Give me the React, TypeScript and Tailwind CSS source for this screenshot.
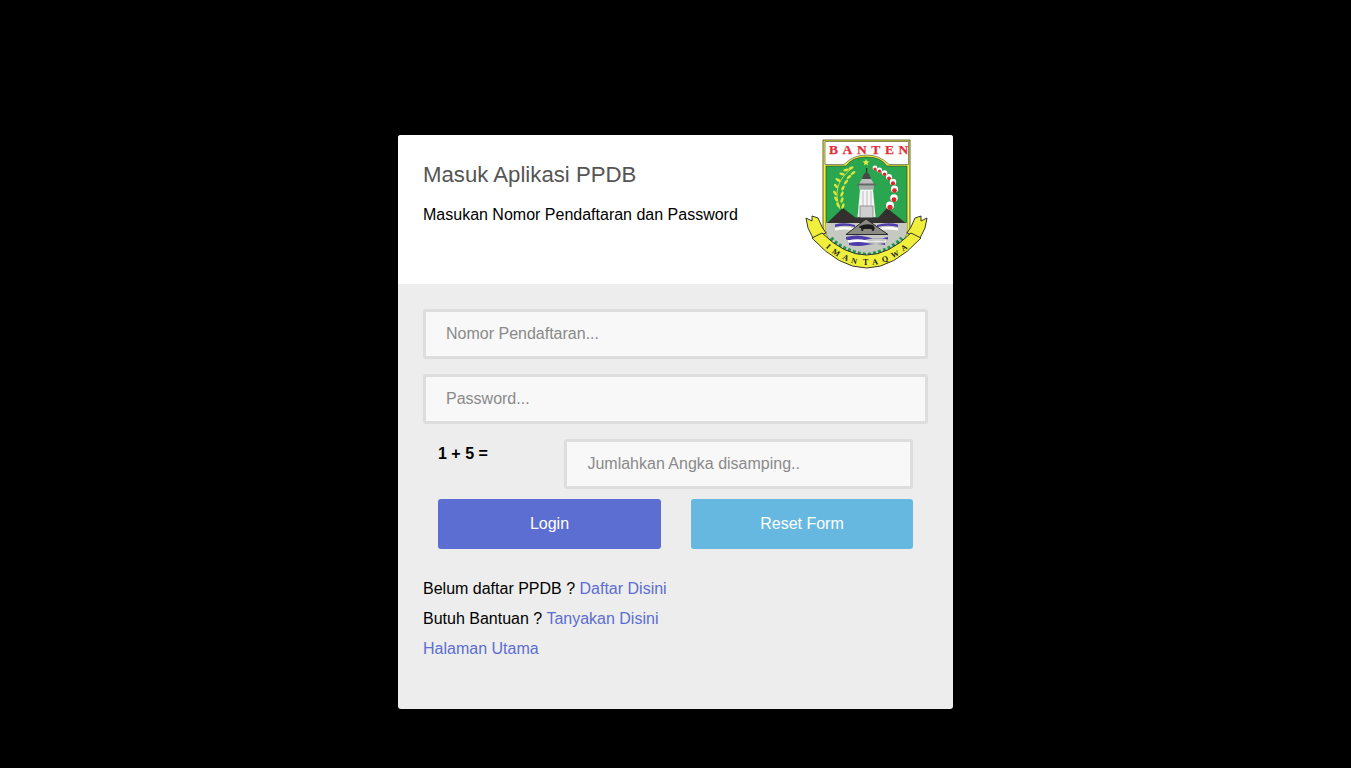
const inputClass =
  "block h-[50px] rounded-[3px] border-[3px] border-[#dddddd] bg-[#f8f8f8] pl-[20px] pr-4 text-[16px] text-[#555555] outline-none placeholder:text-[#8a8a8a]";

const ribbonLetters: [string, number, number, number][] = [
  ["I", 828.3, 246.7, 40],
  ["M", 836, 252.7, 33],
  ["A", 845.7, 257.7, 25],
  ["N", 854.3, 261, 15],
  ["T", 865.7, 262.8, 0],
  ["A", 875, 262, -8],
  ["Q", 885, 259.3, -17],
  ["W", 895, 254.3, -25],
  ["A", 904, 247.7, -37],
];

const cotton: [number, number, number][] = [
  [875, 168, 2.4],
  [879.5, 170, 2.6],
  [884.5, 173, 2.8],
  [889, 177, 3],
  [893, 182, 3.2],
  [894.5, 189, 3.6],
  [894, 198, 3.8],
  [890, 205.5, 4],
];

const leaves: [number, number, number][] = [
  [851, 168, -25],
  [846, 170, -10],
  [853, 173, -35],
  [842, 174, 15],
  [849, 177, -40],
  [838, 180, 30],
  [846, 182, -50],
  [836, 186, 45],
  [843, 188, -60],
  [835, 193, 55],
  [842, 194, -65],
  [836, 199, 60],
  [842, 200, -70],
  [838, 205, 60],
  [843, 206, -70],
];

function Logo() {
  return (
    <svg viewBox="805 135 125 135" width="125" height="135" className="block">
      <defs>
        <clipPath id="inner">
          <path d="M826 166 H846 Q852 157 866.5 157 Q881 157 887 166 H907 V230 Q907 248 866.5 256 Q826 248 826 230 Z" />
        </clipPath>
      </defs>
      {/* shield */}
      <path d="M823 140 H910 V230 Q910 250 866.5 258 Q823 250 823 230 Z" fill="#eef03c" stroke="#3c3c14" strokeWidth="0.8" />
      <path d="M825 141.5 H908.5 V164.5 H889 Q880 155 866.5 155 Q853 155 844 164.5 H825 Z" fill="#ffffff" stroke="#444" strokeWidth="0.6" />
      <text x="829" y="153.7" fontFamily="'Liberation Serif', serif" fontWeight="700" fontSize="13.5" letterSpacing="4.6" fill="#e62e38" stroke="#e62e38" strokeWidth="0.25">BANTEN</text>
      <path d="M826 166 H846 Q852 157 866.5 157 Q881 157 887 166 H907 V230 Q907 248 866.5 256 Q826 248 826 230 Z" fill="#2aa650" stroke="#3a3a20" strokeWidth="0.6" />
      <g clipPath="url(#inner)">
        {/* mountains */}
        <path d="M826 224 L843 208 L856 218 H878 L887 208 L907 224 Z" fill="#33302e" />
        {/* grey land */}
        <path d="M826 223 H907 V258 H826 Z" fill="#c6c8c2" />
        <path d="M835 224.5 Q845 222 855 225 V227 Q845 224.5 835 227 Z M877 225 Q888 222 898 224.5 V227 Q888 224.5 877 227 Z" fill="#4f3cab" />
        <path d="M835 228 Q845 226 855 228.5 V230.5 Q845 228.5 835 230.5 Z M877 228.5 Q888 226 898 228 V230.5 Q888 228.5 877 230.5 Z" fill="#ffffff" />
        <path d="M846 237 Q857 234 867 237 T888 237 V239.5 Q878 237 867 239.5 T846 239.5 Z" fill="#4f3cab" />
        <path d="M848 240.5 Q857 238 867 240.5 T886 240.5 V242 Q877 239.5 867 242 T848 242 Z" fill="#ffffff" />
        <path d="M849 243 Q858 241 867 243 T885 243 V245 Q876 243 867 245 T849 245 Z" fill="#4f3cab" />
        {/* green teeth */}
        <path d="M831 238 Q842 251 866.5 255 Q891 251 902 238" fill="none" stroke="#1f9a4a" strokeWidth="4" strokeDasharray="3 2.2" />
      </g>
      {/* central mountain and buffalo */}
      <path d="M846 234.5 L866 219 L888 234.5 Z" fill="#8b8b84" stroke="#2b2b2b" strokeWidth="1" />
      <path d="M860 226 Q866 223 873 225 L875 228 L873.5 231 H872 L871.5 229 H863.5 L863 231 H861.5 L861 228 L858.5 227.5 Z" fill="#1d1d1d" />
      {/* lighthouse */}
      <rect x="866" y="168" width="1.2" height="6" fill="#333" />
      <path d="M862 180 Q863 173 866.5 172 Q870 173 871 180 Z" fill="#484848" />
      <path d="M859 184 L862 179 H871 L874 184 Z" fill="#bdbdbd" />
      <rect x="857" y="183.5" width="19" height="2" fill="#666" />
      <rect x="859" y="185.5" width="15" height="4" fill="#a9a9a9" />
      <path d="M860 189.5 H873 L875.5 217 H857.5 Z" fill="#f4f4f4" />
      <path d="M863 191 V216 M867 191 V216 M871 191 V216" stroke="#b5b5b5" strokeWidth="0.9" />
      <rect x="860" y="206" width="13" height="12.5" fill="#cfcfcf" stroke="#777" strokeWidth="0.7" />
      <rect x="852" y="217.5" width="29" height="1.6" fill="#333" />
      {/* star */}
      <path d="M866 159 L867 161.3 L869.4 161.4 L867.5 163 L868.2 165.4 L866 164 L863.8 165.4 L864.5 163 L862.6 161.4 L865 161.3 Z" fill="#e8ef3c" />
      {/* rice */}
      <path d="M840 209 C835 195 835 182 851 169" fill="none" stroke="#cfe23a" strokeWidth="1" />
      <g fill="#dbe63c">
        {leaves.map(([x, y, r]) => (
          <ellipse key={`${x}-${y}`} cx={x} cy={y} rx="2.8" ry="1.3" transform={`rotate(${r} ${x} ${y})`} />
        ))}
      </g>
      {/* cotton */}
      {cotton.map(([x, y, r]) => (
        <g key={`${x}-${y}`}>
          <circle cx={x} cy={y} r={r} fill="#ffffff" />
          <circle cx={x} cy={y + r * 0.45} r={r * 0.65} fill="#d8262c" />
        </g>
      ))}
      {/* scroll */}
      <path d="M806 218 L812 221 L812 216 L818 218 L822 227 L826 233 L813 238 L808 228 Z" fill="#f0f03c" stroke="#222" strokeWidth="0.9" strokeLinejoin="round" />
      <path d="M927 218 L921 221 L921 216 L915 218 L911 227 L907 233 L920 238 L925 228 Z" fill="#f0f03c" stroke="#222" strokeWidth="0.9" strokeLinejoin="round" />
      <path d="M822 233 Q866.5 277 911 233 L921 238 Q866.5 298 812 238 Z" fill="#f0f03c" stroke="#222" strokeWidth="0.9" strokeLinejoin="round" />
      <g fontFamily="'Liberation Serif', serif" fontWeight="700" fontSize="8" fill="#1c1c1c" textAnchor="middle" dominantBaseline="central">
        {ribbonLetters.map(([c, x, y, r]) => (
          <text key={`${c}-${x}`} x={x} y={y} transform={`rotate(${r} ${x} ${y})`}>
            {c}
          </text>
        ))}
      </g>
    </svg>
  );
}

export default function App() {
  return (
    <div className="flex min-h-screen justify-center bg-black pt-[135px] font-['Liberation_Sans',Arial,sans-serif] text-[16px] text-black">
      <div className="h-[574px] w-[555px] rounded-[3px] bg-[#ededed]">
        <div className="flex h-[149px] justify-between rounded-t-[3px] bg-white pl-[25px] pr-[23px]">
          <div className="pt-[25px]">
            <h1 className="text-[22.2px] leading-[29px] text-[#555555]">Masuk Aplikasi PPDB</h1>
            <p className="mt-[13px] leading-[26px]">Masukan Nomor Pendaftaran dan Password</p>
          </div>
          <Logo />
        </div>
        <div className="px-[25px] pt-[25px]">
          <input className={`${inputClass} w-full`} placeholder="Nomor Pendaftaran..." />
          <input className={`${inputClass} mt-[15px] w-full`} type="password" placeholder="Password..." />
          <div className="mt-[15px] flex justify-between px-[15px]">
            <label className="pt-[3px] font-bold leading-[24px]">1 + 5 =</label>
            <input className={`${inputClass} w-[348.6px]`} placeholder="Jumlahkan Angka disamping.." />
          </div>
          <div className="mt-[10px] flex justify-between px-[15px]">
            <button className="h-[50px] w-[223px] rounded-[3px] bg-[#5c6ed1] text-white">Login</button>
            <button className="h-[50px] w-[222px] rounded-[3px] bg-[#67b8e1] text-white">Reset Form</button>
          </div>
          <div className="mt-[25px] leading-[30px]">
            <p>
              Belum daftar PPDB ? <a className="text-[#5c6ed1]" href="#">Daftar Disini</a>
            </p>
            <p>
              Butuh Bantuan ? <a className="text-[#5c6ed1]" href="#">Tanyakan Disini</a>
            </p>
            <p>
              <a className="text-[#5c6ed1]" href="#">Halaman Utama</a>
            </p>
          </div>
        </div>
      </div>
    </div>
  );
}
